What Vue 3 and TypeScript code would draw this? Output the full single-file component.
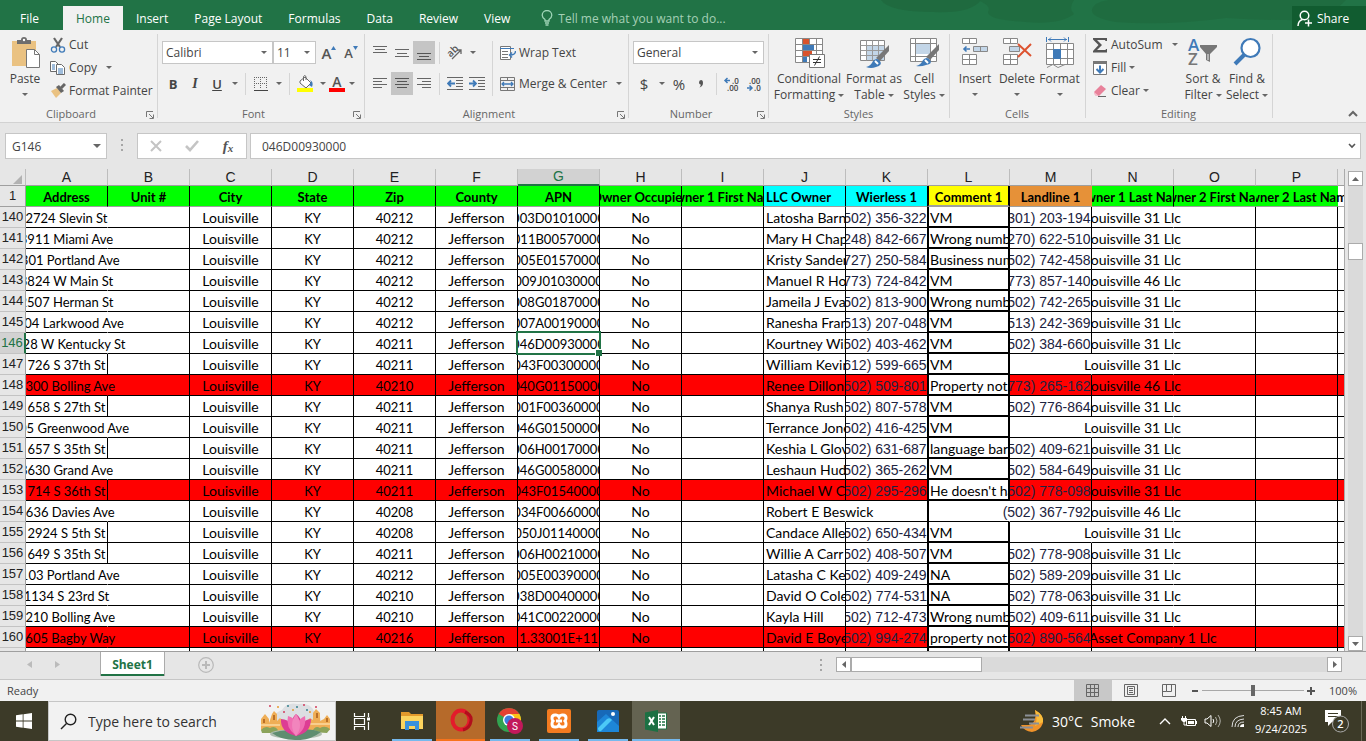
<script setup lang="ts">
import { ref } from 'vue'

interface Row {
  n: number
  address: string
  zip: string
  apn: string
  llc: string
  wireless: string
  comment: string
  landline: string
  last: string
  red?: boolean
  fits?: boolean
}

interface Cell {
  text: string
  cls: string[]
}

const menuTabs = ['Home', 'Insert', 'Page Layout', 'Formulas', 'Data', 'Review', 'View']
const letters = 'ABCDEFGHIJKLMNOP'.split('')
const fontName = ref('Calibri')
const fontSize = ref('11')
const numberFormat = ref('General')
const cellName = ref('G146')
const formula = ref('046D00930000')
const zoomLevel = ref(50)
const selectedRow = 146

const headers: Cell[] = [
  { text: 'Address', cls: ['green'] },
  { text: 'Unit #', cls: ['green'] },
  { text: 'City', cls: ['green'] },
  { text: 'State', cls: ['green'] },
  { text: 'Zip', cls: ['green'] },
  { text: 'County', cls: ['green'] },
  { text: 'APN', cls: ['green'] },
  { text: 'Owner Occupied', cls: ['green'] },
  { text: 'Owner 1 First Name', cls: ['green'] },
  { text: 'LLC Owner', cls: ['cyan', 'left'] },
  { text: 'Wierless 1', cls: ['cyan'] },
  { text: 'Comment 1', cls: ['yellow', 'boxed'] },
  { text: 'Landline 1', cls: ['orange', 'noline'] },
  { text: 'Owner 1 Last Name', cls: ['green'] },
  { text: 'Owner 2 First Name', cls: ['green', 'noline'] },
  { text: 'Owner 2 Last Name', cls: ['green', 'noline', 'spill-right'] },
]

const L31 = 'Louisville 31 Llc'
const L46 = 'Louisville 46 Llc'

const rows: Row[] = [
  { n: 140, address: '2724 Slevin St', zip: '40212', apn: '003D01010000', llc: 'Latosha Barnes', wireless: '(502) 356-3221', comment: 'VM', landline: '(301) 203-1942', last: L31 },
  { n: 141, address: '3911 Miami Ave', zip: '40212', apn: '011B00570000', llc: 'Mary H Chapman', wireless: '(248) 842-6672', comment: 'Wrong number', landline: '(270) 622-5101', last: L31 },
  { n: 142, address: '4301 Portland Ave', zip: '40212', apn: '005E01570000', llc: 'Kristy Sanders', wireless: '(727) 250-5840', comment: 'Business number', landline: '(502) 742-4580', last: L31 },
  { n: 143, address: '3824 W Main St', zip: '40212', apn: '009J01030000', llc: 'Manuel R Howard', wireless: '(773) 724-8421', comment: 'VM', landline: '(773) 857-1402', last: L46 },
  { n: 144, address: '2507 Herman St', zip: '40212', apn: '008G01870000', llc: 'Jameila J Evans', wireless: '(502) 813-9002', comment: 'Wrong number', landline: '(502) 742-2651', last: L31 },
  { n: 145, address: '4104 Larkwood Ave', zip: '40212', apn: '007A00190000', llc: 'Ranesha Franklin', wireless: '(513) 207-0480', comment: 'VM', landline: '(513) 242-3692', last: L31 },
  { n: 146, address: '2828 W Kentucky St', zip: '40211', apn: '046D00930000', llc: 'Kourtney Wilson', wireless: '(502) 403-4621', comment: 'VM', landline: '(502) 384-6601', last: L31 },
  { n: 147, address: '726 S 37th St', zip: '40211', apn: '043F00300000', llc: 'William Kevin', wireless: '(612) 599-6650', comment: 'VM', landline: '', last: L31, fits: true },
  { n: 148, address: '3300 Bolling Ave', zip: '40210', apn: '040G01150000', llc: 'Renee Dillon', wireless: '(502) 509-8012', comment: 'Property not', landline: '(773) 265-1621', last: L46, red: true },
  { n: 149, address: '658 S 27th St', zip: '40211', apn: '001F00360000', llc: 'Shanya Rush', wireless: '(502) 807-5781', comment: 'VM', landline: '(502) 776-8640', last: L31, fits: true },
  { n: 150, address: '3605 Greenwood Ave', zip: '40211', apn: '046G01500000', llc: 'Terrance Jones', wireless: '(502) 416-4252', comment: 'VM', landline: '', last: L31 },
  { n: 151, address: '657 S 35th St', zip: '40211', apn: '006H00170000', llc: 'Keshia L Glover', wireless: '(502) 631-6871', comment: 'language barrier', landline: '(502) 409-6212', last: L31, fits: true },
  { n: 152, address: '3630 Grand Ave', zip: '40211', apn: '046G00580000', llc: 'Leshaun Hudson', wireless: '(502) 365-2620', comment: 'VM', landline: '(502) 584-6491', last: L31 },
  { n: 153, address: '714 S 36th St', zip: '40211', apn: '043F01540000', llc: 'Michael W Cole', wireless: '(502) 295-2961', comment: "He doesn't have", landline: '(502) 778-0982', last: L31, red: true, fits: true },
  { n: 154, address: '3636 Davies Ave', zip: '40208', apn: '034F00660000', llc: 'Robert E Beswick', wireless: '', comment: '', landline: '(502) 367-7921', last: L46 },
  { n: 155, address: '2924 S 5th St', zip: '40208', apn: '050J01140000', llc: 'Candace Allen', wireless: '(502) 650-4341', comment: 'VM', landline: '', last: L31, fits: true },
  { n: 156, address: '649 S 35th St', zip: '40211', apn: '006H00210000', llc: 'Willie A Carr', wireless: '(502) 408-5071', comment: 'VM', landline: '(502) 778-9082', last: L31, fits: true },
  { n: 157, address: '4103 Portland Ave', zip: '40212', apn: '005E00390000', llc: 'Latasha C Key', wireless: '(502) 409-2491', comment: 'NA', landline: '(502) 589-2091', last: L31 },
  { n: 158, address: '1134 S 23rd St', zip: '40210', apn: '038D00400000', llc: 'David O Cole', wireless: '(502) 774-5311', comment: 'NA', landline: '(502) 778-0631', last: L31 },
  { n: 159, address: '3210 Bolling Ave', zip: '40210', apn: '041C00220000', llc: 'Kayla Hill', wireless: '(502) 712-4731', comment: 'Wrong number', landline: '(502) 409-6112', last: L31 },
  { n: 160, address: '4605 Bagby Way', zip: '40216', apn: '1.33001E+11', llc: 'David E Boyer', wireless: '(502) 994-2741', comment: 'property not', landline: '(502) 890-5641', last: 'Select Asset Company 1 Llc', red: true },
]

function cellsOf(r: Row): Cell[] {
  return [
    { text: r.address, cls: r.fits ? [] : ['spill-right', 'noline'] },
    { text: '', cls: [] },
    { text: 'Louisville', cls: ['word'] },
    { text: 'KY', cls: [] },
    { text: r.zip, cls: [] },
    { text: 'Jefferson', cls: ['word'] },
    { text: r.apn, cls: r.n === selectedRow ? ['active'] : [] },
    { text: 'No', cls: ['word'] },
    { text: '', cls: [] },
    { text: r.llc, cls: r.wireless ? ['left', 'word'] : ['left', 'word', 'spill-right', 'noline'] },
    { text: r.wireless, cls: ['phone'] },
    { text: r.comment, cls: r.comment ? ['left', 'word', 'boxed'] : ['open'] },
    { text: r.landline, cls: ['phone', r.comment ? '' : 'spill-left', r.landline ? '' : 'noline'] },
    { text: r.last, cls: ['word', 'noline', r.landline ? 'spill-right' : 'spill-both'] },
    { text: '', cls: [] },
    { text: '', cls: [] },
  ]
}
</script>

<template>
  <div class="window">
    <header class="topbar">
      <svg class="swirl" width="500" height="30" viewBox="0 0 500 30" aria-hidden="true">
        <g fill="#1f6a3f">
          <path d="M15 0h100q-10 14-48 12q-44 0-52-12z" />
          <path d="M112 0h96q-6 9 0 14q-14 11-48 8q-38-2-38-10q4-6-10-12z" opacity=".8" />
          <path d="M230 4q10-6 30-4h220q-20 22-60 20q-30 0-60-2q-60 8-110 4q-34-6-20-18z" opacity=".8" />
        </g>
      </svg>
      <nav class="tabs">
        <button class="tab file">File</button>
        <button v-for="t in menuTabs" :key="t" class="tab" :class="{ on: t === 'Home' }">{{ t }}</button>
      </nav>
      <button class="tell">
        <svg width="12" height="16" viewBox="0 0 12 16" fill="none" stroke="#9fd5b7" stroke-width="1.3"><path d="M4 11V9.500Q1.200 7.500 1.200 5.200A4.600 4.500 0 0 1 10.800 5.200Q10.800 7.500 8 9.500V11zM4 13h4M4.500 15h3" /></svg>
        <span>Tell me what you want to do...</span>
      </button>
      <button class="share">
        <svg width="16" height="17" viewBox="0 0 16 17" fill="none" stroke="#fff" stroke-width="1.500"><circle cx="7.500" cy="5.500" r="4.300" /><path d="M1 16q0-5 4.500-6.500M11.500 9.500v7M8 13h7" /></svg>
        <span>Share</span>
      </button>
    </header>

    <section class="ribbon">
      <div class="group clipboard">
        <div class="body">
          <button class="big paste">
            <svg width="32" height="32" viewBox="0 0 32 32">
              <path d="M3 4h24v25H3z" fill="#eac282" />
              <path d="M8 7V3h4q0-3 3-3t3 3h4v4z" fill="#6e6e6e" /><circle cx="15" cy="3" r="1.200" fill="#fff" />
              <path d="M17.500 12.500h8l5 5v13h-13z" fill="#fff" stroke="#777" /><path d="M25.500 12.500v5h5" fill="none" stroke="#777" />
            </svg>
            <span>Paste</span><i class="caret"></i>
          </button>
          <div class="stack">
            <button class="line">
              <svg width="16" height="16" viewBox="0 0 16 16" fill="none"><path d="M4 1l6 9M12 1L6 10" stroke="#666" stroke-width="2.200" /><g stroke="#3f7ab8" stroke-width="1.300"><circle cx="4" cy="12.500" r="2.600" /><circle cx="12" cy="12.500" r="2.600" /></g></svg>
              <span>Cut</span>
            </button>
            <button class="line">
              <svg width="16" height="16" viewBox="0 0 16 16" fill="#fff" stroke="#6a6a6a"><path d="M.5 1.500h5l3 3v7h-8z" /><path d="M6.500 4.500h5l3 3v7h-8z" /><path d="M2 5h3M2 7h3M2 9h3M8 9h5M8 11h5M8 13h5" stroke="#3f7ab8" /></svg>
              <span>Copy</span><i class="caret wide"></i>
            </button>
            <button class="line">
              <svg width="16" height="16" viewBox="0 0 16 16"><path d="M1 8l6-3 4 5-5 5z" fill="#eac282" /><path d="M6 4l3-2 5 6-3 2z" fill="#666" /><path d="M11 5l4-4" stroke="#666" stroke-width="3" /></svg>
              <span>Format Painter</span>
            </button>
          </div>
        </div>
        <div class="caption">Clipboard<svg class="launch" width="8" height="8" viewBox="0 0 8 8" fill="none" stroke="#777"><path d="M.5 6V.5H7M3 3l4 4M7.500 3.500v4h-4" /></svg></div>
      </div>

      <div class="group font">
        <div class="body rows">
          <div class="bar">
            <label class="combo name"><select v-model="fontName" aria-label="Font"><option>Calibri</option></select><i class="caret"></i></label>
            <label class="combo size"><select v-model="fontSize" aria-label="Font size"><option>11</option></select><i class="caret"></i></label>
            <button class="tool glyph grow" aria-label="Increase font size">A<svg width="5" height="4" viewBox="0 0 5 4"><path d="M0 4L2.500 0 5 4z" fill="#3f7ab8" /></svg></button>
            <button class="tool glyph shrink" aria-label="Decrease font size">A<svg width="5" height="4" viewBox="0 0 5 4"><path d="M0 0L2.500 4 5 0z" fill="#3f7ab8" /></svg></button>
          </div>
          <div class="bar">
            <button class="tool bold">B</button>
            <button class="tool italic">I</button>
            <button class="tool under">U</button>
            <button class="drop" aria-label="Underline style"><i class="caret"></i></button>
            <i class="sep"></i>
            <button class="tool" aria-label="Borders"><svg width="14" height="14" viewBox="0 0 14 14" fill="none" stroke="#666"><path d="M0 .5h13M0 6.500h13M.5 0v12M6.500 0v12M12.500 0v12" stroke-dasharray="1 1" /><path d="M0 13.500h14" stroke="#444" /></svg></button>
            <button class="drop" aria-label="Border style"><i class="caret"></i></button>
            <i class="sep"></i>
            <button class="tool" aria-label="Fill color"><svg width="17" height="17" viewBox="0 0 17 17"><path d="M3 6l5-4 6 6-5 5-6-5z" fill="#fff" stroke="#666" /><path d="M6.500 6V1.500q1-2 2.500 0V5" fill="none" stroke="#666" /><path d="M13 5q4 2 2 7l-3-2 2-3z" fill="#3f7ab8" /><path d="M0 13h16v4H0z" fill="#ff0" /></svg></button>
            <button class="drop" aria-label="Fill colors"><i class="caret"></i></button>
            <button class="tool glyph color" aria-label="Font color">A</button>
            <button class="drop" aria-label="Font colors"><i class="caret"></i></button>
          </div>
        </div>
        <div class="caption">Font<svg class="launch" width="8" height="8" viewBox="0 0 8 8" fill="none" stroke="#777"><path d="M.5 6V.5H7M3 3l4 4M7.500 3.500v4h-4" /></svg></div>
      </div>

      <div class="group align">
        <div class="body">
          <div class="rows">
            <div class="bar">
              <button class="tool" aria-label="Top align"><svg width="14" height="16" viewBox="0 0 14 16" stroke="#666"><path d="M0 1.500h14M2 4.500h10M0 7.500h14" /></svg></button>
              <button class="tool" aria-label="Middle align"><svg width="14" height="16" viewBox="0 0 14 16" stroke="#666"><path d="M0 4.500h14M2 8.500h10M0 11.500h14" /></svg></button>
              <button class="tool on" aria-label="Bottom align"><svg width="14" height="16" viewBox="0 0 14 16" stroke="#555"><path d="M0 8.500h14M2 11.500h10M0 14.500h14" /></svg></button>
              <i class="sep"></i>
              <button class="tool" aria-label="Orientation"><svg class="open-box" width="18" height="17" viewBox="0 0 18 17"><text x="1" y="11" transform="rotate(-45 6 8)" font-family="Open Sans" font-size="10" font-weight="600" fill="#555">ab</text><path d="M6 15L15 6M15 10V6h-4" fill="none" stroke="#666" stroke-width="1.300" /></svg></button>
              <button class="drop" aria-label="Orientation options"><i class="caret"></i></button>
            </div>
            <div class="bar">
              <button class="tool" aria-label="Align left"><svg width="14" height="12" viewBox="0 0 14 12" stroke="#666"><path d="M0 .5h14M0 3.500h9M0 6.500h14M0 9.500h9" /></svg></button>
              <button class="tool on" aria-label="Center"><svg width="14" height="12" viewBox="0 0 14 12" stroke="#555"><path d="M0 .5h14M2 3.500h10M0 6.500h14M2 9.500h10" /></svg></button>
              <button class="tool" aria-label="Align right"><svg width="14" height="12" viewBox="0 0 14 12" stroke="#666"><path d="M0 .5h14M5 3.500h9M0 6.500h14M5 9.500h9" /></svg></button>
              <i class="sep"></i>
              <button class="tool" aria-label="Decrease indent"><svg width="16" height="13" viewBox="0 0 16 13" stroke="#666" fill="none"><path d="M0 .5h16M9 3.500h7M9 6.500h7M9 9.500h7M0 12.500h16" /><path d="M1 6.500h7M4 3.500l-3 3 3 3" stroke="#3f7ab8" stroke-width="1.800" /></svg></button>
              <button class="tool" aria-label="Increase indent"><svg width="16" height="13" viewBox="0 0 16 13" stroke="#666" fill="none"><path d="M0 .5h16M9 3.500h7M9 6.500h7M9 9.500h7M0 12.500h16" /><path d="M0 6.500h7M4 3.500l3 3-3 3" stroke="#3f7ab8" stroke-width="1.800" /></svg></button>
            </div>
          </div>
          <i class="sep tall"></i>
          <div class="rows">
            <button class="line">
              <svg width="16" height="16" viewBox="0 0 16 16" fill="none"><path d="M.5 1.500h10v13H.5z" fill="#fff" stroke="#777" /><path d="M2 6.500h6M2 9.500h6M2 12.500h6" stroke="#777" /><path d="M0 3.500h14" stroke="#3f7ab8" /><path d="M15.500 6q0 4-5 4M12 7.500L9.500 10l2.500 2.500" stroke="#3f7ab8" stroke-width="1.400" /></svg>
              <span>Wrap Text</span>
            </button>
            <button class="line">
              <svg width="16" height="16" viewBox="0 0 16 16" fill="none"><path d="M.5 1.500h14v13H.5zM.5 4.500h14M.5 11.500h14M7.500 1.500v3M7.500 11.500v3" stroke="#777" /><path d="M2 8h11M4 6L2 8l2 2M11 6l2 2-2 2" stroke="#3f7ab8" stroke-width="1.300" /></svg>
              <span>Merge &amp; Center</span><i class="caret wide"></i>
            </button>
          </div>
        </div>
        <div class="caption">Alignment<svg class="launch" width="8" height="8" viewBox="0 0 8 8" fill="none" stroke="#777"><path d="M.5 6V.5H7M3 3l4 4M7.500 3.500v4h-4" /></svg></div>
      </div>

      <div class="group number">
        <div class="body rows">
          <div class="bar"><label class="combo fmt"><select v-model="numberFormat" aria-label="Number format"><option>General</option></select><i class="caret"></i></label></div>
          <div class="bar">
            <button class="tool sign">$</button>
            <button class="drop" aria-label="Currency"><i class="caret"></i></button>
            <button class="tool sign">%</button>
            <button class="tool" aria-label="Comma style"><svg width="6" height="8" viewBox="0 0 6 8"><path d="M1 2.500Q1 0 3 0t2 3Q5 6 1.500 7.500 3 6 2.700 4.600 1 4.500 1 2.500z" fill="#555" /></svg></button>
            <i class="sep"></i>
            <button class="tool dec" aria-label="Increase decimal"><svg class="open-box" width="18" height="16" viewBox="0 0 18 16"><path d="M7 4.500H2M4.500 2L2 4.500 4.500 7" fill="none" stroke="#3f7ab8" stroke-width="1.500" /><g font-family="Open Sans" font-size="8" font-weight="600" fill="#444"><text x="9" y="8">.0</text><text x="4" y="15">.00</text></g></svg></button>
            <button class="tool dec" aria-label="Decrease decimal"><svg class="open-box" width="18" height="16" viewBox="0 0 18 16"><path d="M2 12h5M4.500 9.500L7 12l-2.500 2.500" fill="none" stroke="#3f7ab8" stroke-width="1.500" /><g font-family="Open Sans" font-size="8" font-weight="600" fill="#444"><text x="4" y="8">.00</text><text x="9" y="15">.0</text></g></svg></button>
          </div>
        </div>
        <div class="caption">Number<svg class="launch" width="8" height="8" viewBox="0 0 8 8" fill="none" stroke="#777"><path d="M.5 6V.5H7M3 3l4 4M7.500 3.500v4h-4" /></svg></div>
      </div>

      <div class="group styles">
        <div class="body">
          <button class="big cond">
            <svg width="32" height="32" viewBox="0 0 32 32"><path d="M2.500 1.500h27v24h-27zM2.500 7.500h27M2.500 13.500h27M2.500 19.500h27M9.500 1.500v24M16.500 1.500v24M23.500 1.500v24" fill="#fff" stroke="#888" /><path d="M10 2h6v5h-6zM10 14h9v5h-9z" fill="#d9532c" /><path d="M10 8h11v5H10zM10 20h4v5h-4z" fill="#3f7ab8" /><path d="M16.500 17.500h15v13h-15z" fill="#fff" stroke="#777" /><path d="M20 22.500h8M20 25.500h8M26.500 19.500l-5 9" stroke="#333" fill="none" /></svg>
            <span>Conditional</span><span>Formatting<i class="caret"></i></span>
          </button>
          <button class="big fmtas">
            <svg width="32" height="32" viewBox="0 0 32 32"><path d="M2.500 3.500h24v20h-24z" fill="#fff" stroke="#888" /><path d="M9 9h17v14H9z" fill="#c3d6e8" /><path d="M2.500 8.500h24M2.500 13.500h24M2.500 18.500h24M8.500 3.500v20M14.500 3.500v20M20.500 3.500v20" stroke="#999" fill="none" /><path d="M31 8v6l-9 10-4-3z" fill="#777" /><path d="M8 30q5-1 7-6 4-4 7 0t-4 6q-5 2-10 0z" fill="#3f7ab8" /><path d="M17 24l3 3" stroke="#fff" stroke-width="2" /></svg>
            <span>Format as</span><span>Table<i class="caret"></i></span>
          </button>
          <button class="big cellst">
            <svg width="32" height="32" viewBox="0 0 32 32"><path d="M2.500 1.500h26v23h-26zM2.500 6.500h26M2.500 19.500h26M7.500 1.500v23M22.500 1.500v23" fill="#fff" stroke="#888" /><path d="M8 7h14v10H8z" fill="#c3d6e8" /><path d="M31 7v6l-9 10-4-3z" fill="#777" /><path d="M8 29q5-1 7-6 4-4 7 0t-4 5q-5 2-10 1z" fill="#3f7ab8" /><path d="M17 23l3 3" stroke="#fff" stroke-width="2" /></svg>
            <span>Cell</span><span>Styles<i class="caret"></i></span>
          </button>
        </div>
        <div class="caption">Styles</div>
      </div>

      <div class="group cells">
        <div class="body">
          <button class="big c1">
            <svg width="28" height="32" viewBox="0 0 28 32" fill="#fff" stroke="#888"><path d="M1.500 1.500h14v5h-14zM8.500 1.500v5M1.500 17.500h14v10h-14zM1.500 22.500h14M8.500 17.500v10" /><path d="M12.500 9.500h14v5h-14zM19.500 9.500v5" fill="#c3d6e8" /><path d="M9 12H3M5.500 9.500L3 12l2.500 2.500" fill="none" stroke="#3f7ab8" stroke-width="1.600" /></svg>
            <span>Insert</span><i class="caret"></i>
          </button>
          <button class="big c2">
            <svg width="30" height="32" viewBox="0 0 30 32" fill="#fff" stroke="#888"><path d="M1.500 1.500h14v5h-14zM8.500 1.500v5M1.500 17.500h14v10h-14zM1.500 22.500h14M8.500 17.500v10" /><path d="M7.500 9.500h10v5h-10z" fill="#c3d6e8" /><path d="M16 7l13 12M29 7L16 20" fill="none" stroke="#dd5330" stroke-width="2" /></svg>
            <span>Delete</span><i class="caret"></i>
          </button>
          <button class="big c3">
            <svg width="30" height="32" viewBox="0 0 30 32" fill="#fff" stroke="#888"><path d="M1.500 6.500h27v21h-27zM1.500 12.500h27M1.500 21.500h27M8.500 6.500v21M15.500 6.500v21M22.500 6.500v21" /><path d="M8.500 12.500h7v9h-7z" fill="#3f7ab8" stroke="#3f7ab8" /><path d="M2 30.500l6-3 5 3 7-3" /><path d="M1.500 0v5M23.500 0v5M3 2.500h19M6 .5l-2 2 2 2M19 .5l2 2-2 2" fill="none" stroke="#3f7ab8" /></svg>
            <span>Format</span><i class="caret"></i>
          </button>
        </div>
        <div class="caption">Cells</div>
      </div>

      <div class="group editing">
        <div class="body">
          <div class="stack">
            <button class="line"><svg width="16" height="16" viewBox="0 0 16 16"><path d="M1 1h14v3h-1.500l-.5-1H5l5 5-5 5h8.500l.5-1H15v3.500H1V14l5.500-6L1 2.500z" fill="#555" /></svg><span>AutoSum</span><i class="caret wide"></i></button>
            <button class="line"><svg width="16" height="16" viewBox="0 0 16 16"><path d="M1.500 1.500h13v13h-13z" fill="#fff" stroke="#777" /><path d="M1 1h14v3H1z" fill="#777" /><path d="M8 5.500v7M4.500 9L8 12.500 11.500 9" fill="none" stroke="#3f7ab8" stroke-width="2" /></svg><span>Fill</span><i class="caret"></i></button>
            <button class="line"><svg width="16" height="16" viewBox="0 0 16 16"><path d="M2 9l7-7 5 4-7 7H4z" fill="#e8819a" /><path d="M2 9l5 4H4l-2-2z" fill="#f6bccb" /><path d="M6 13.500h8" stroke="#666" /></svg><span>Clear</span><i class="caret"></i></button>
          </div>
          <button class="big e1">
            <svg width="32" height="32" viewBox="0 0 32 32"><g font-family="Open Sans" font-size="17" font-weight="600"><text x="1" y="14" fill="#3f7ab8">A</text><text x="1" y="28" fill="#777">Z</text></g><path d="M13 8h17v2l-7 7v8l-4-2v-6l-6-7z" fill="#777" /><path d="M21 17v6" stroke="#f1f1f1" /></svg>
            <span>Sort &amp;</span><span>Filter<i class="caret"></i></span>
          </button>
          <button class="big e2">
            <svg width="32" height="32" viewBox="0 0 32 32"><circle cx="19.500" cy="11" r="9" fill="#fff" stroke="#3f7ab8" stroke-width="2.200" /><path d="M13 18L4 27" stroke="#3f7ab8" stroke-width="4" /></svg>
            <span>Find &amp;</span><span>Select<i class="caret"></i></span>
          </button>
        </div>
        <div class="caption">Editing</div>
      </div>
      <button class="fold" aria-label="Collapse ribbon"><svg width="10" height="7" viewBox="0 0 10 7"><path d="M1 6l4-4 4 4" fill="none" stroke="#666" stroke-width="2" /></svg></button>
    </section>

    <section class="fbar">
      <label class="field namebox"><input v-model="cellName" aria-label="Name box"><i class="caret big-caret"></i></label>
      <span class="grip"><i></i><i></i><i></i></span>
      <div class="field fx">
        <button aria-label="Cancel"><svg width="12" height="12" viewBox="0 0 12 12"><path d="M1 1l10 10M11 1L1 11" stroke="#c4c4c4" stroke-width="2" /></svg></button>
        <button aria-label="Enter"><svg width="14" height="12" viewBox="0 0 14 12"><path d="M1 6l4 4 8-9" fill="none" stroke="#c4c4c4" stroke-width="2.600" /></svg></button>
        <button class="fxb"><i>f</i><small>x</small></button>
      </div>
      <label class="field formula"><input v-model="formula" aria-label="Formula bar"><svg width="8" height="6" viewBox="0 0 8 6"><path d="M1 1l3 3 3-3" fill="none" stroke="#555" stroke-width="1.600" /></svg></label>
    </section>

    <main class="sheet">
      <div class="gridwrap">
        <table>
          <colgroup><col class="rh"><col v-for="l in letters" :key="l" class="dc"><col></colgroup>
          <thead>
            <tr class="letters">
              <th class="corner"><svg width="9" height="9" viewBox="0 0 9 9"><path d="M9 0v9H0z" fill="#b2b2b2" /></svg></th>
              <th v-for="l in letters" :key="l" scope="col" :class="{ sel: l === 'G' }">{{ l }}</th>
              <th class="rest"></th>
            </tr>
            <tr class="titles">
              <th class="num" scope="row">1</th>
              <td v-for="(h, i) in headers" :key="i" :class="h.cls"><div class="txt"><span>{{ h.text }}</span></div></td>
              <td class="rest"></td>
            </tr>
          </thead>
          <tbody>
            <tr v-for="r in rows" :key="r.n" :class="{ red: r.red }">
              <th class="num" :class="{ sel: r.n === selectedRow }" scope="row">{{ r.n }}</th>
              <td v-for="(c, i) in cellsOf(r)" :key="i" :class="c.cls"><div class="txt"><span>{{ c.text }}</span></div></td>
              <td class="rest"></td>
            </tr>
            <tr class="stub">
              <th class="num"></th>
              <td v-for="(l, i) in letters" :key="l" :class="{ open: i === 11, thick: i === 11, noline: i === 0 || i === 13 }"></td>
              <td class="rest"></td>
            </tr>
          </tbody>
        </table>
      </div>
      <div class="vscroll">
        <button aria-label="Scroll up"><svg width="7" height="4" viewBox="0 0 7 4"><path d="M0 4l3.500-4L7 4z" fill="#666" /></svg></button>
        <div class="track"><div class="thumb"></div></div>
        <button aria-label="Scroll down"><svg width="7" height="4" viewBox="0 0 7 4"><path d="M0 0l3.500 4L7 0z" fill="#666" /></svg></button>
      </div>
    </main>

    <section class="sheets">
      <button class="nav" aria-label="Previous sheet"><svg width="5" height="7" viewBox="0 0 5 7"><path d="M5 0v7L0 3.500z" fill="#bbb" /></svg></button>
      <button class="nav" aria-label="Next sheet"><svg width="5" height="7" viewBox="0 0 5 7"><path d="M0 0v7l5-3.500z" fill="#bbb" /></svg></button>
      <button class="sheettab">Sheet1</button>
      <button class="add" aria-label="New sheet"><svg width="16" height="16" viewBox="0 0 16 16" fill="none" stroke="#b9b9b9"><circle cx="8" cy="8" r="7.300" stroke-width="1.200" /><path d="M8 4v8M4 8h8" stroke-width="2" /></svg></button>
      <span class="grip right"><i></i><i></i><i></i></span>
      <div class="hscroll">
        <button aria-label="Scroll left"><svg width="4" height="7" viewBox="0 0 4 7"><path d="M4 0v7L0 3.500z" fill="#666" /></svg></button>
        <div class="track"><div class="thumb"></div></div>
        <button aria-label="Scroll right"><svg width="4" height="7" viewBox="0 0 4 7"><path d="M0 0v7l4-3.500z" fill="#666" /></svg></button>
      </div>
    </section>

    <section class="status">
      <span class="ready">Ready</span>
      <button class="view on" aria-label="Normal"><svg width="14" height="13" viewBox="0 0 14 13" fill="none" stroke="#666"><path d="M.5.5h12v12H.5zM.5 4.500h12M.5 8.500h12M4.500.5v12M8.500.5v12" /></svg></button>
      <button class="view" aria-label="Page layout view"><svg width="14" height="13" viewBox="0 0 14 13" fill="none" stroke="#666"><path d="M.5.5h13v12H.5zM3.500 2.500h7v8h-7zM5 4.500h4M5 6.500h4M5 8.500h4" /></svg></button>
      <button class="view" aria-label="Page break preview"><svg width="14" height="13" viewBox="0 0 14 13" fill="none" stroke="#666"><path d="M.5.5h13v12H.5zM4.500.5v7h5v-7M.5 7.500h4" /></svg></button>
      <button class="zoom" aria-label="Zoom out"><svg width="8" height="8" viewBox="0 0 8 8"><path d="M1 4h6" stroke="#555" stroke-width="2" /></svg></button>
      <input v-model="zoomLevel" class="slider" type="range" min="0" max="100" aria-label="Zoom">
      <button class="zoom" aria-label="Zoom in"><svg width="8" height="8" viewBox="0 0 8 8"><path d="M0 4h8M4 0v8" stroke="#555" stroke-width="2" /></svg></button>
      <span class="pct">100%</span>
    </section>

    <footer class="taskbar">
      <button class="start" aria-label="Start"><svg width="16" height="16" viewBox="0 0 16 16" fill="#fff"><path d="M0 2.300L6.700 1.300V7.600H0zM7.500 1.200L16 0V7.600H7.500zM0 8.400h6.700v6.300L0 13.700zM7.500 8.400H16V16L7.500 14.800z" /></svg></button>
      <label class="search">
        <svg width="17" height="17" viewBox="0 0 17 17" fill="none" stroke="#222" stroke-width="1.400"><circle cx="10.500" cy="6.500" r="5.300" /><path d="M6.500 10.500L1 16" /></svg>
        <input placeholder="Type here to search" aria-label="Search">
        <svg class="lotus" width="72" height="38" viewBox="0 0 72 38">
          <path d="M12 26Q10 12 22 8 27 0 37 2 50 0 54 9q9 5 7 17z" fill="#dcdfe2" />
          <path d="M1 28V17l4-5 4 5v4l3-9 2-3 3 3v7l3-3 4 4h22l4-4 3 2V11l3-4 4 4v8l4-2 3-4 3 4v11q-10 3-20 2H16q-8 2-15-2z" fill="#efae56" />
          <path d="M4 17v4M14 13v5M57 11v5M67 16v4" stroke="#b96f28" stroke-width="2" /><path d="M1 23h19M50 22h20" stroke="#f8cf8e" stroke-width="2" />
          <path d="M1 28q4-5 9-2 5-3 8 2l-2 3H2zM52 30q3-7 8-4 5-3 10 1l-3 4z" fill="#8ba35b" />
          <ellipse cx="36" cy="32" rx="26" ry="5" fill="#aebcae" /><path d="M12 31q12-4 23-2 12-4 26 1-12 9-26 8-14 0-23-7z" fill="#5f8d70" />
          <path d="M36 34Q20 30 21 17q7 0 11 6-1-7 4-11 6 4 5 11 4-6 10-6 0 14-15 17z" fill="#dd3d93" /><path d="M36 34q-11-9-8-20 7 2 9 8 3-6 8-8 2 13-9 20z" fill="#f06eb2" /><path d="M36 34q-8-11 0-22 8 11 0 22z" fill="#f285bd" />
          <g fill="#d23c5e"><circle cx="10" cy="4" r="1" /><circle cx="24" cy="10" r="1" /><circle cx="44" cy="3" r="1" /><circle cx="56" cy="5" r="1" /></g><g fill="#e79b31"><circle cx="18" cy="5" r="1" /><circle cx="33" cy="8" r="1" /><circle cx="50" cy="10" r="1" /></g><g fill="#35808c"><circle cx="28" cy="4" r="1" /><circle cx="47" cy="8" r="1" /><circle cx="37" cy="5" r="1" /></g>
        </svg>
      </label>
      <button class="app plain" aria-label="Task view"><svg width="18" height="17" viewBox="0 0 18 17" fill="none" stroke="#fff"><path d="M1.500 5.500h10v6h-10zM1.500 0v3.500h10V0M1.500 17v-3.500h10V17M15.500 0v4M15.500 9v8" stroke-width="1.200" /><path d="M14 4.500h3v3h-3z" fill="#fff" stroke="none" /></svg></button>
      <button class="app run" aria-label="File Explorer"><svg width="22" height="18" viewBox="0 0 22 18"><path d="M0 0h8l2 2h12v15H0z" fill="#e39a2c" /><path d="M0 4h22v13H0z" fill="#fcd45e" /><path d="M4 18V9h14v9h-4v-4H8v4z" fill="#3a91dc" /></svg></button>
      <button class="app opera" aria-label="Opera"><svg width="24" height="24" viewBox="0 0 24 24"><ellipse cx="12" cy="12" rx="8.500" ry="9.500" fill="none" stroke="#e31b2b" stroke-width="4" /><path d="M16 4q7 3 6 9-1 7-8 9" fill="none" stroke="#b10f1c" stroke-width="3" /></svg></button>
      <button class="app run" aria-label="Chrome"><svg width="28" height="28" viewBox="0 0 28 28"><circle cx="13" cy="13" r="12" fill="#32a350" /><path d="M13 13L2.600 7A12 12 0 0 1 23.400 7z" fill="#e34133" /><path d="M13 7h10.400A12 12 0 0 1 13 25l5-9z" fill="#fbc116" /><circle cx="13" cy="13" r="6" fill="#fff" /><circle cx="13" cy="13" r="4.600" fill="#3b7de0" /><circle cx="19" cy="19" r="8" fill="#c2185b" /><text x="19" y="23" text-anchor="middle" font-family="Roboto" font-size="10" fill="#fff">S</text></svg></button>
      <button class="app run" aria-label="XAMPP"><svg width="24" height="24" viewBox="0 0 24 24"><rect width="24" height="24" rx="2" fill="#f47b20" /><path d="M8 6h1q2 0 3 2 1-2 3-2h1q3 0 3 3 0 2-1 3 1 1 1 3 0 3-3 3h-1q-2 0-3-2-1 2-3 2H8q-3 0-3-3 0-2 1-3-1-1-1-3 0-3 3-3z" fill="none" stroke="#fff" stroke-width="3" /><path d="M9 12h6" stroke="#fff" stroke-width="3" /></svg></button>
      <button class="app run" aria-label="Photos"><svg width="22" height="22" viewBox="0 0 22 22"><rect width="22" height="22" rx="2" fill="#1769b8" /><path d="M0 12L9 4l13 12v6H0z" fill="#1d86d8" /><path d="M1 18l9-9q3-2 5 1L4 21q-3 1-3-3z" fill="#4cc9f7" /><circle cx="16" cy="4" r="2" fill="#fff" /></svg></button>
      <button class="app run excel" aria-label="Excel"><svg width="22" height="22" viewBox="0 0 22 22"><path d="M11 3h10.500v16H11z" fill="#fff" stroke="#217346" /><path d="M14 6h2M14 9h2M14 12h2M14 15h2M17 6h3M17 9h3M17 12h3M17 15h3" stroke="#217346" stroke-width="1.500" /><path d="M0 2.500L13 0v22L0 19.500z" fill="#1c7043" /><path d="M4 7l5 8M9 7l-5 8" stroke="#fff" stroke-width="2" /></svg></button>
      <button class="weather">
        <svg width="24" height="22" viewBox="0 0 24 22"><path d="M15 0q9 5 8 13-3 8-11 9-8-1-11-7h8q8-2 6-15z" fill="#f0932a" /><path d="M15 0q9 5 8 12l-8 4q3-7 0-16z" fill="#f9bd3b" /><path d="M5 5.500h14M3 9.500h12M9 13.500h10M0 17.500h13" stroke="#8b8f96" stroke-width="2" /></svg>
        <span>30°C</span><span>Smoke</span>
      </button>
      <button class="tray t1" aria-label="Show hidden icons"><svg width="12" height="8" viewBox="0 0 12 8"><path d="M1 7l5-5 5 5" fill="none" stroke="#fff" stroke-width="1.400" /></svg></button>
      <button class="tray t2" aria-label="Battery"><svg width="16" height="12" viewBox="0 0 16 12" fill="none" stroke="#fff"><path d="M5.500 4.500h9v6h-9z" /><path d="M7 6h6v3H7z" fill="#fff" stroke="none" /><path d="M15.500 6v3M1.500 1v2M4.500 1v2M3 6v4h2" /><path d="M0 3h6v2L4 7H2L0 5z" fill="#fff" stroke="none" /></svg></button>
      <button class="tray t3" aria-label="Volume"><svg width="17" height="14" viewBox="0 0 17 14" fill="none" stroke="#fff"><path d="M1 5h2l4-3.500v11L3 9H1zM9 5q1.500 2 0 4" /><path d="M11.500 3q3 4 0 8M14 1q4.500 6 0 12" opacity=".6" /></svg></button>
      <button class="tray t4" aria-label="Network"><svg width="14" height="14" viewBox="0 0 14 14" fill="none" stroke="#ddd"><path d="M1 13Q1 2 13 1.500M4 13q0-7.500 9-8M7 13q0-5 6-5" /><path d="M9 13q0-3 4-3v3z" fill="#fff" stroke="none" /></svg></button>
      <button class="clock"><span>8:45 AM</span><span>9/24/2025</span></button>
      <button class="notes" aria-label="Notifications"><svg width="26" height="26" viewBox="0 0 26 26"><path d="M1 2h16v12H8l-4 4v-4H1z" fill="#fff" /><path d="M4 5.500h10M4 8.500h10" stroke="#3c3a28" /><circle cx="16.500" cy="16" r="8" fill="#3c3a28" stroke="#aaa" /><text x="16.500" y="20" text-anchor="middle" font-family="Open Sans" font-size="11" font-weight="600" fill="#fff">2</text></svg></button>
      <i class="desk"></i>
    </footer>
  </div>
</template>

<style>
body { margin: 0; }
</style>

<style scoped>
* { box-sizing: border-box; }
.window { --ui: "Open Sans", "Noto Sans", sans-serif; --cell: Lato, "Open Sans", sans-serif; font-family: var(--ui); font-size: 11px; color: #444; background: #e6e6e6; min-height: 100vh; display: flex; flex-direction: column; overflow: hidden; }
button { font: inherit; color: inherit; background: none; border: 0; padding: 0; margin: 0; display: flex; align-items: center; justify-content: center; flex: none; white-space: nowrap; }
input, select { font: inherit; color: inherit; background: none; border: 0; padding: 0; margin: 0; outline: 0; min-width: 0; }
svg { display: block; flex: none; }
.open-box { overflow: visible; }
.caret { display: inline-block; flex: none; width: 0; height: 0; border: 3px solid transparent; border-top-color: #666; border-bottom: 0; }

.topbar { height: 30px; background: #217346; color: #fff; display: flex; align-items: flex-end; position: relative; }
.swirl { position: absolute; right: 0; top: 0; }
.tabs { display: flex; position: relative; }
.tab { height: 24px; padding: 0 13px; font-size: 12px; }
.file { width: 63px; padding: 0 4px 0 0; }
.tab.on { background: #f1f1f1; color: #217346; }
.tell { height: 24px; margin-left: 18px; gap: 5px; color: #a5d0b6; font-size: 12px; position: relative; }
.share { position: relative; margin-left: auto; width: 74px; height: 24px; background: #115c30; gap: 4px; padding-right: 12px; font-size: 12px; }

.ribbon { height: 93px; background: #f1f1f1; border-bottom: 1px solid #d2d2d2; display: flex; position: relative; flex: none; }
.group { display: flex; flex-direction: column; flex: none; position: relative; }
.group::after { content: ""; position: absolute; right: 0; top: 4px; bottom: 4px; width: 1px; background: #d5d5d5; }
.body { height: 76px; display: flex; }
.caption { height: 16px; line-height: 16px; text-align: center; color: #666; position: relative; padding-right: 16px; }
.launch { position: absolute; right: 4px; top: 5px; }
.clipboard { width: 158px; } .font { width: 207px; } .align { width: 264px; } .number { width: 140px; } .styles { width: 181px; } .cells { width: 136px; } .editing { width: 187px; }
.styles .caption, .cells .caption, .editing .caption { padding-right: 2px; }

.big { flex-direction: column; justify-content: flex-start; padding-top: 7px; line-height: 16px; font-size: 12px; }
.big svg { margin-bottom: 2px; }
.big > .caret { margin-top: 6px; }
.big span { display: flex; align-items: center; gap: 3px; }
.paste { width: 50px; }
.stack { display: flex; flex-direction: column; padding-top: 3px; }
.line { justify-content: flex-start; gap: 3px; font-size: 12px; height: 23px; }
.line .wide { margin-left: 6px; }

.rows { display: flex; flex-direction: column; gap: 8px; padding-top: 11px; }
.rows.body { padding-left: 4px; }
.bar { display: flex; align-items: center; height: 23px; }
.combo { display: flex; align-items: center; height: 23px; background: #fff; border: 1px solid #c6c6c6; padding: 0 5px 0 3px; font-size: 12px; }
.combo select { appearance: none; flex: 1; height: 21px; }
.name { width: 111px; } .size { width: 43px; } .fmt { width: 131px; }
.tool { width: 22px; height: 23px; }
.tool.on { background: #c5c5c5; }
.drop { width: 13px; height: 23px; }
.sep { width: 1px; height: 22px; background: #d5d5d5; margin: 0 4px; flex: none; }
.sep.tall { height: 55px; margin: 11px 7px 0 4px; }
.glyph { font-size: 15px; font-weight: 600; color: #555; align-items: center; }
.glyph svg { margin-bottom: 10px; }
.grow { margin-left: 2px; } .shrink { font-size: 13px; }
.bold { font-weight: 700; font-size: 13px; } .italic { font: italic 700 14px "Liberation Serif", serif; } .under { font-weight: 600; font-size: 13px; text-decoration: underline; }
.color { height: 17px; width: 16px; border-bottom: 4px solid #f00; line-height: 13px; font-size: 14px; }
.align .body { padding-left: 4px; }
.sign { font-size: 15px; }
.cond { width: 76px; margin-left: 2px; } .fmtas { width: 54px; } .cellst { width: 46px; }
.c1 { width: 42px; margin-left: 4px; } .c2 { width: 42px; } .c3 { width: 43px; }
.editing .stack { width: 92px; padding-left: 6px; } .e1 { width: 50px; } .e2 { width: 38px; }
.fold { margin: auto 8px 5px auto; }

.fbar { height: 46px; display: flex; align-items: flex-start; padding: 10px 5px 0; font-size: 12px; flex: none; }
.field { height: 26px; background: #fff; border: 1px solid #c6c6c6; display: flex; align-items: center; flex: none; }
.namebox { width: 102px; padding: 0 5px 0 6px; }
.namebox input, .formula input { flex: 1; }
.big-caret { border-width: 4px 4px 0; }
.grip { display: flex; flex-direction: column; gap: 3px; width: 30px; align-items: center; padding-top: 6px; }
.grip i { width: 2px; height: 2px; background: #a6a6a6; }
.fx { width: 110px; justify-content: space-around; }
.fx button { width: 36px; }
.fxb { font: italic 700 15px "Liberation Serif", serif; color: #555; }
.fxb small { font-size: 11px; margin-top: 3px; }
.formula { flex: 1; margin-left: 3px; padding: 0 4px 0 11px; }

.sheet { display: flex; flex: none; border-bottom: 1px solid #9f9f9f; }
.gridwrap { flex: 1; min-width: 0; overflow: hidden; border-right: 1px solid #ababab; background: #fff; }
table { table-layout: fixed; border-collapse: separate; border-spacing: 0; width: 100%; min-width: 1339px; font-family: var(--cell); font-size: 13px; color: #000; }
.rh { width: 26px; } .dc { width: 82px; }
th, td { padding: 0; }
.letters th { height: 17px; background: #e6e6e6; border-right: 1px solid #bdbdbd; border-bottom: 1px solid #9f9f9f; font: 14px/16px "Liberation Sans", sans-serif; color: #222; }
.letters .rest { border-right: 0; }
.letters .sel { background: #d2d2d2; color: #217346; border-bottom: 2px solid #217346; line-height: 15px; }
.corner svg { margin: 4px 3px 0 auto; }
.num { height: 21px; background: #e6e6e6; border-right: 1px solid #9f9f9f; border-bottom: 1px solid #c3c3c3; font: 13px/20px "Liberation Sans", sans-serif; color: #222; vertical-align: bottom; }
.num.sel { background: #d2d2d2; color: #217346; border-right: 2px solid #217346; }
td { height: 21px; border-right: 1px solid #000; border-bottom: 1px solid #000; position: relative; }
.txt { position: relative; z-index: 1; height: 20px; line-height: 22px; display: flex; justify-content: center; white-space: nowrap; clip-path: inset(0); }
.txt span { flex: none; }
.word .txt { font-size: 14px; }
.left .txt { justify-content: flex-start; padding-left: 2px; }
.boxed.left .txt { padding-left: 1px; }
.phone .txt { font: 14px/22px "Liberation Sans", sans-serif; color: #1c2340; }
.spill-right .txt { clip-path: inset(0 -82px 0 0); }
.spill-left .txt { clip-path: inset(0 0 0 -82px); }
.spill-both .txt { clip-path: inset(0 -82px); }
.noline { border-right-color: transparent; }
.boxed { border-width: 0 2px 2px 1px; border-style: solid; border-color: #000; background: #fff; }
.boxed .txt { height: 19px; }
.titles td { border-bottom-color: #9f9f9f; font-weight: 700; }
.titles .num { border-bottom-color: #9f9f9f; }
.green { background: #0f0; } .cyan { background: #0ff; } .yellow { background: #ff0; } .orange { background: #e69138; }
.green.noline { border-right-color: #0f0; }
.orange.noline { border-right-color: #e69138; }
.red td { background: #f00; }
.red td.boxed { background: #fff; }
.rest { border-right: 0; }
.red .noline { border-right-color: #f00; }
.open { border-left: 1px solid #000; border-right-color: transparent; }
.stub td, .stub th { height: 3px; border-bottom: 0; }
.stub .thick { border-right: 2px solid #000; }
.active::after { content: ""; position: absolute; inset: -2px; border: 2px solid #217346; z-index: 2; }
.active::before { content: ""; position: absolute; right: -3px; bottom: -3px; width: 6px; height: 6px; background: #217346; border: 1px solid #fff; border-width: 1px 0 0 1px; z-index: 3; }

.vscroll { width: 21px; display: flex; flex-direction: column; padding: 2px 3px 0; flex: none; }
.vscroll button { width: 15px; height: 15px; background: #fff; border: 1px solid #ababab; }
.vscroll .track { flex: 1; width: 15px; background: #dadada; padding-top: 57px; }
.vscroll .thumb { height: 17px; background: #fff; border: 1px solid #ababab; }

.sheets { height: 28px; display: flex; align-items: flex-start; flex: none; border-bottom: 1px solid #c6c6c6; padding-right: 24px; }
.nav { width: 28px; height: 24px; }
.nav:first-child { margin-left: 15px; }
.sheettab { width: 65px; height: 24px; margin-left: 29px; background: #fff; border: 1px solid #ababab; border-width: 0 1px; box-shadow: inset 0 -2px #217346; color: #217346; font-weight: 700; font-size: 12px; }
.add { margin: 5px 0 0 33px; }
.grip.right { margin-left: auto; padding-top: 7px; }
.hscroll { display: flex; width: 506px; height: 16px; margin-top: 5px; }
.hscroll button { width: 15px; height: 15px; background: #fff; border: 1px solid #ababab; }
.hscroll .track { flex: 1; height: 15px; background: #dadada; }
.hscroll .thumb { width: 131px; height: 15px; background: #fff; border: 1px solid #ababab; }

.status { height: 21px; background: #f1f1f1; display: flex; align-items: center; flex: none; color: #444; }
.ready { margin-left: 7px; margin-right: auto; }
.view { width: 38px; height: 21px; } .view.on { background: #c8c8c8; }
.zoom { width: 10px; height: 20px; }
.view + .zoom { margin-left: 2px; }
.slider { appearance: none; width: 102px; height: 16px; margin: 0 2px; background: linear-gradient(#a8a8a8, #a8a8a8) center / 100% 1px no-repeat; }
.slider::-webkit-slider-thumb { appearance: none; width: 4px; height: 11px; background: #666; border: 0; }
.pct { width: 50px; text-align: right; padding-right: 9px; }

.taskbar { height: 40px; background: #3c3a28; display: flex; align-items: stretch; color: #fff; flex: none; margin-top: auto; }
.start { width: 48px; }
.search { width: 288px; background: #f2f2f2; border: 1px solid #c6c6c6; display: flex; align-items: center; padding: 0 3px 0 11px; color: #333; font-size: 14px; }
.search input { flex: 1; margin-left: 11px; }
.search input::placeholder { color: #333; opacity: 1; }
.app { width: 49px; position: relative; }
.app.plain { width: 51px; }
.run::after { content: ""; position: absolute; left: 5px; right: 4px; bottom: 0; height: 2px; background: #76b9ed; }
.opera { background: #b66a2a; border-bottom: 2px solid #f7731c; }
.excel { width: 48px; background: #646351; }
.excel::after { left: 0; right: 0; }
.weather { margin-left: auto; gap: 8px; font-size: 14px; margin-right: 23px; }
.t1 { width: 14px; } .t2 { width: 16px; margin-left: 9px; } .t3 { width: 17px; margin-left: 7px; } .t4 { width: 14px; margin-left: 10px; }
.clock { flex-direction: column; width: 68px; font-size: 11px; line-height: 18px; margin-left: 2px; padding-bottom: 2px; }
.notes { width: 26px; margin-left: 9px; }
.desk { width: 1px; background: #6a6957; margin: 0 4px 0 11px; }
</style>
